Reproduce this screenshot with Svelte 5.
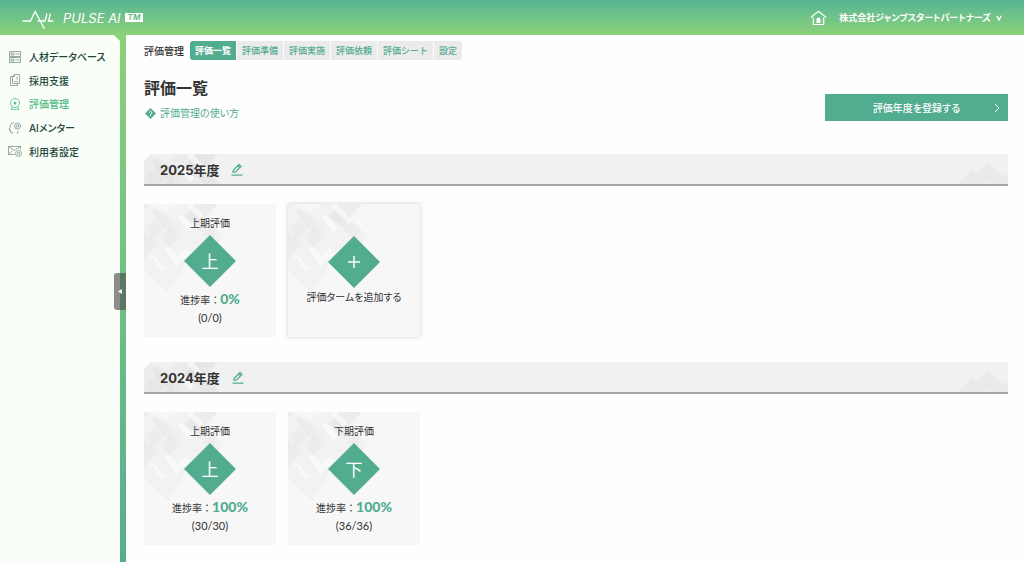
<script lang="ts">
  const menu = [
    { label: '人材データベース', icon: 'database' },
    { label: '採用支援', icon: 'document' },
    { label: '評価管理', icon: 'award', current: true },
    { label: 'AIメンター', icon: 'mentor' },
    { label: '利用者設定', icon: 'user' },
  ]

  const tabs = ['評価一覧', '評価準備', '評価実施', '評価依頼', '評価シート', '設定']

  const years = [
    {
      name: '2025年度',
      canAdd: true,
      terms: [{ name: '上期評価', mark: '上', done: 0, total: 0, rate: 0 }],
    },
    {
      name: '2024年度',
      canAdd: false,
      terms: [
        { name: '上期評価', mark: '上', done: 30, total: 30, rate: 100 },
        { name: '下期評価', mark: '下', done: 36, total: 36, rate: 100 },
      ],
    },
  ]

  let activeTab = $state('評価一覧')
  let menuOpen = $state(true)
</script>

{#snippet pattern()}
  <svg class="pattern" width="84" height="92" viewBox="0 0 84 92" aria-hidden="true">
    <g fill="#000" fill-opacity="0.02">
      <path d="M0 0h6l12 10L34 0h40L62 14l18 19-20 20-10-8-26 44L0 66z" />
      <path d="M3 22 13 12l10 10L7 38z" />
      <path d="M16 33 26 23l10 10-10 11z" />
      <path d="M8 8 14 2l22 22-8 7z" />
      <path d="M0 26 14 40 0 56z" />
      <path d="M40 12 52 0h22L52 22z" />
      <path d="m42 12 8-8 24 24-8 8z" />
      <path d="M0 0h6L0 7z" />
    </g>
    <g fill="#fff" fill-opacity="0.55">
      <path d="m20 46 4-4 10 10 8-8 5 5-14 13z" />
      <path d="m46 0 3 0 15 17-3 3L43 3z" />
      <path d="m4 50 2-2 15 16-3 3z" />
      <path d="m34 14 4-4 12 14-4 4z" />
    </g>
  </svg>
{/snippet}

<header class="header">
  <a class="logo" href="#top" aria-label="PULSE AI">
    <svg width="32" height="24" viewBox="0 0 32 24" fill="none" stroke="#fff" stroke-width="1.3">
      <path d="M.5 15h8l4.700-9.500L22.500 23M15.500 15H23l2-7.500M28.500 7.500l-2 7.500h5" />
    </svg>
    <span class="logo__name">PULSE AI</span>
    <span class="logo__tm">TM</span>
  </a>
  <div class="account">
    <a class="account__home" href="#home" aria-label="ホーム">
      <svg width="17" height="16" viewBox="0 0 17 16" fill="none" stroke="#fff" stroke-width="1.2">
        <path d="M.8 7.500 8.500 1.200l7.700 6.300M3.300 7.500v7h9M13.700 7.500v7h-2" />
        <path d="M6.500 13V9.500a2 2 0 0 1 4 0V13z" fill="#fff" stroke="none" />
      </svg>
    </a>
    <button class="account__name">
      株式会社ジャンプスタートパートナーズ
      <svg width="6" height="6" viewBox="0 0 6 6" fill="none" stroke="#fff" stroke-width="1.400">
        <path d="M.8.8 3 5 5.200.8" />
      </svg>
    </button>
  </div>
</header>

<div class="layout">
  <div class="side">
    {#if menuOpen}
      <div class="side__panel">
        <nav class="menu">
          {#each menu as item}
            <a class="menu__item" class:current={item.current} href="#{item.icon}">
              <svg width="14" height="14" viewBox="0 0 14 14" fill="none" stroke="currentColor" stroke-width="0.8">
                {#if item.icon === 'database'}
                  <path d="M1.500 1.500h11v5h-11zM1.500 7.500h11v5h-11zM3 3h3v2H3zM3 9h3v2H3zM7.500 4h4M7.500 10h4" />
                {:else if item.icon === 'document'}
                  <path d="M6.500 1.500h5v9h-7v-7zM6.500 1.500v2h-2M4.500 3.500h-2v9h7v-2M9 3.500v3M6 8.500h4" />
                {:else if item.icon === 'award'}
                  <circle cx="7" cy="6" r="4.500" />
                  <path d="m4 9.500-.5 3.500 2-1 1.500 1 1.500-1 2 1-.5-3.500" />
                  <path d="m7 4 .6 1.400 1.500.1-1.200 1 .4 1.500L7 7.200 5.700 8l.4-1.500-1.200-1 1.500-.1z" fill="currentColor" stroke="none" />
                {:else if item.icon === 'mentor'}
                  <path d="M6 1.500C3 2 2 4 2.200 6L1 8.500h1.200v2.500h2v2M9.500 13v-2l1.500-1.500" />
                  <circle cx="9.500" cy="5" r="3" />
                  <circle cx="9.500" cy="5" r="1.300" />
                {:else}
                  <path d="M7 10.500H.5v-8h12v3M.5 2.500l6 4 6-4M.5 10.500l4-4" />
                  <circle cx="10.500" cy="9.500" r="3" />
                  <circle cx="10.500" cy="9.500" r="1.200" />
                {/if}
              </svg>
              {item.label}
            </a>
          {/each}
        </nav>
      </div>
    {/if}
    <button class="side__toggle" aria-label="メニューを閉じる" onclick={() => (menuOpen = !menuOpen)}>
      <svg width="4" height="5" viewBox="0 0 4 5" fill="#fff"><path d="M4 0v5L0 2.500z" /></svg>
    </button>
  </div>

  <main class="main">
    <nav class="tabs">
      <span class="tabs__label">評価管理</span>
      <div class="tabs__list">
        {#each tabs as tab}
          <button class="tab" class:active={tab === activeTab} onclick={() => (activeTab = tab)}>{tab}</button>
        {/each}
      </div>
    </nav>

    <div class="heading">
      <div>
        <h1>評価一覧</h1>
        <a class="guide" href="#guide">
          <svg width="12" height="11" viewBox="0 0 12 11">
            <path d="M6.500 0 12 5.500 6.500 11 1 5.500z" fill="#52ac90" />
            <path d="M4.800 4.700 6.500 3.200l1.700 1.500-1.700 1.500v2" fill="none" stroke="#fff" />
          </svg>
          評価管理の使い方
        </a>
      </div>
      <button class="register">
        評価年度を登録する
        <svg width="6" height="10" viewBox="0 0 6 10" fill="none" stroke="#fff"><path d="m1 1 4 4-4 4" /></svg>
      </button>
    </div>

    {#each years as year}
      <section class="year">
        <div class="year__bar">
          {@render pattern()}
          <h2>{year.name}</h2>
          <button class="year__edit" aria-label="{year.name}を編集">
            <svg width="12" height="13" viewBox="0 0 12 13" fill="none" stroke="#52ac90" stroke-width="1.300">
              <path d="M2 9.300 2.500 7 8 1.500 10 3.500 4.500 9zM6.800 2.700l2 2" />
              <path d="M.5 12.200h11" />
            </svg>
          </button>
          <svg class="year__hills" width="50" height="22" viewBox="0 0 50 22" aria-hidden="true">
            <path d="M0 22 15 7l4 4L30 0l16 15 4-3v10z" fill="#eaeaea" />
            <path d="m27 22 3-2 3 2z" fill="#f1f1f1" />
          </svg>
        </div>
        <div class="terms">
          {#each year.terms as term}
            <a class="term" href="#term">
              {@render pattern()}
              <span class="term__name">{term.name}</span>
              <span class="term__mark">{term.mark}</span>
              <span class="term__rate">進捗率：<strong>{term.rate}%</strong></span>
              <span class="term__count">({term.done}/{term.total})</span>
            </a>
          {/each}
          {#if year.canAdd}
            <button class="term term--add">
              {@render pattern()}
              <span class="term__mark">
                <svg width="12" height="12" viewBox="0 0 12 12" stroke="#fff" stroke-width="1.500">
                  <path d="M6 0v12M0 6h12" />
                </svg>
              </span>
              <span class="term__add">評価タームを追加する</span>
            </button>
          {/if}
        </div>
      </section>
    {/each}
  </main>
</div>

<style>
  :global(body) {
    margin: 0;
    background: #fefefe;
    color: #333;
    font-family: "Noto Sans CJK JP", sans-serif;
    font-size: 10px;
    font-feature-settings: "palt";
  }
  :global(#app) {
    display: flex;
    flex-direction: column;
    min-height: 100vh;
  }
  button {
    border: none;
    padding: 0;
    background: none;
    color: inherit;
    font: inherit;
    font-feature-settings: inherit;
    cursor: pointer;
  }
  a {
    color: inherit;
    text-decoration: none;
  }
  svg {
    flex: none;
  }
  h1,
  h2 {
    margin: 0;
  }
  .header {
    display: flex;
    align-items: center;
    justify-content: space-between;
    height: 35px;
    padding: 0 22px;
    background: linear-gradient(#57b596, #8bd178);
    color: #fff;
  }
  .logo {
    display: flex;
    align-items: center;
  }
  .logo__name {
    margin-left: 9px;
    font-family: Inter, sans-serif;
    font-size: 13px;
    font-style: italic;
  }
  .logo__tm {
    margin-left: 4px;
    padding: 0 3px;
    background: #fff;
    color: #6dc088;
    font-family: Inter, sans-serif;
    font-size: 8px;
    font-style: italic;
    font-weight: 700;
    line-height: 9px;
  }
  .account {
    display: flex;
    align-items: center;
    gap: 12px;
  }
  .account__home {
    display: flex;
  }
  .account__name {
    display: flex;
    align-items: center;
    gap: 5px;
    font-size: 9px;
    font-weight: 700;
  }
  .layout {
    flex: 1;
    display: flex;
  }
  .side {
    position: relative;
    display: flex;
    padding-right: 6px;
    background: linear-gradient(#8bd178, #52ac90);
  }
  .side__panel {
    box-sizing: border-box;
    width: 120px;
    padding: 10px 0 0 8px;
    background: #f9fff8;
    clip-path: polygon(0 0, 114px 0, 100% 6px, 100% 100%, 0 100%);
  }
  .menu {
    display: grid;
    grid-auto-rows: 1fr;
    height: 118px;
  }
  .menu__item {
    display: flex;
    align-items: center;
    gap: 7px;
    color: #24463a;
    font-family: Inter, "Noto Sans CJK JP", sans-serif;
    font-weight: 500;
  }
  .menu__item svg {
    color: #81958b;
  }
  .menu__item.current,
  .menu__item.current svg {
    color: #4dbb83;
  }
  .side__toggle {
    position: absolute;
    top: 238px;
    right: 0;
    display: flex;
    align-items: center;
    justify-content: center;
    width: 12px;
    height: 37px;
    border-radius: 3px 0 0 3px;
    background: rgba(80, 80, 80, 0.65);
  }
  .main {
    flex: 1;
    min-width: 0;
    padding: 6px 16px 16px 18px;
  }
  .tabs {
    display: flex;
    align-items: center;
    gap: 6px;
  }
  .tabs__label {
    font-weight: 500;
  }
  .tabs__list {
    display: flex;
    gap: 1px;
    border-radius: 3px;
    overflow: hidden;
    font-feature-settings: normal;
  }
  .tab {
    height: 19px;
    padding: 0 5px;
    background: #ebebeb;
    color: #52ac90;
    font-size: 9px;
    font-weight: 500;
  }
  .tab.active {
    background: #52ac90;
    color: #fff;
    font-weight: 700;
  }
  .heading {
    display: flex;
    align-items: flex-end;
    justify-content: space-between;
    margin: 15px 0 33px;
  }
  h1 {
    font-size: 16px;
    line-height: 24px;
  }
  .guide {
    display: flex;
    align-items: center;
    gap: 4px;
    margin-top: 6px;
    color: #52ac90;
    line-height: 16px;
  }
  .register {
    display: grid;
    grid-template-columns: 1fr auto;
    align-items: center;
    width: 183px;
    height: 27px;
    padding: 0 8px 0 14px;
    background: #52ac90;
    color: #fff;
    font-weight: 500;
  }
  .year {
    margin-bottom: 25px;
  }
  .year__bar {
    position: relative;
    display: flex;
    align-items: center;
    gap: 12px;
    box-sizing: border-box;
    height: 32px;
    padding-left: 16px;
    border-bottom: 2px solid #a3a3a3;
    background: #f1f1f1;
    clip-path: polygon(7px 0, 100% 0, 100% 100%, 0 100%, 0 7px);
    overflow: hidden;
  }
  .pattern {
    position: absolute;
    top: 0;
    left: 0;
  }
  h2 {
    position: relative;
    font-family: Inter, "Noto Sans CJK JP", sans-serif;
    font-size: 13px;
    font-weight: 700;
  }
  .year__edit {
    position: relative;
    display: flex;
  }
  .year__hills {
    position: absolute;
    right: 0;
    bottom: 0;
  }
  .terms {
    display: flex;
    flex-wrap: wrap;
    gap: 12px;
    margin-top: 18px;
  }
  .term {
    position: relative;
    display: flex;
    flex-direction: column;
    align-items: center;
    box-sizing: border-box;
    width: 132px;
    height: 133px;
    padding-top: 11px;
    background: #f7f7f7;
  }
  .term > span {
    position: relative;
  }
  .term__name {
    line-height: 16px;
  }
  .term__mark {
    display: flex;
    align-items: center;
    justify-content: center;
    width: 52px;
    height: 52px;
    margin-top: 4px;
    background: #52ac90;
    clip-path: polygon(50% 0, 100% 50%, 50% 100%, 0 50%);
    color: #fff;
    font-size: 17px;
    line-height: 24px;
  }
  .term__rate {
    margin-top: 3px;
    line-height: 18px;
    font-feature-settings: normal;
  }
  .term__rate strong {
    color: #52ac90;
    font-family: Lato, sans-serif;
    font-size: 14px;
    font-weight: 900;
  }
  .term__count {
    font-family: Lato, sans-serif;
    font-size: 11px;
    line-height: 18px;
  }
  .term--add {
    padding-top: 28px;
    box-shadow: 0 0 4px rgba(0, 0, 0, 0.2);
  }
  .term__add {
    margin-top: 1px;
    line-height: 16px;
  }
</style>
